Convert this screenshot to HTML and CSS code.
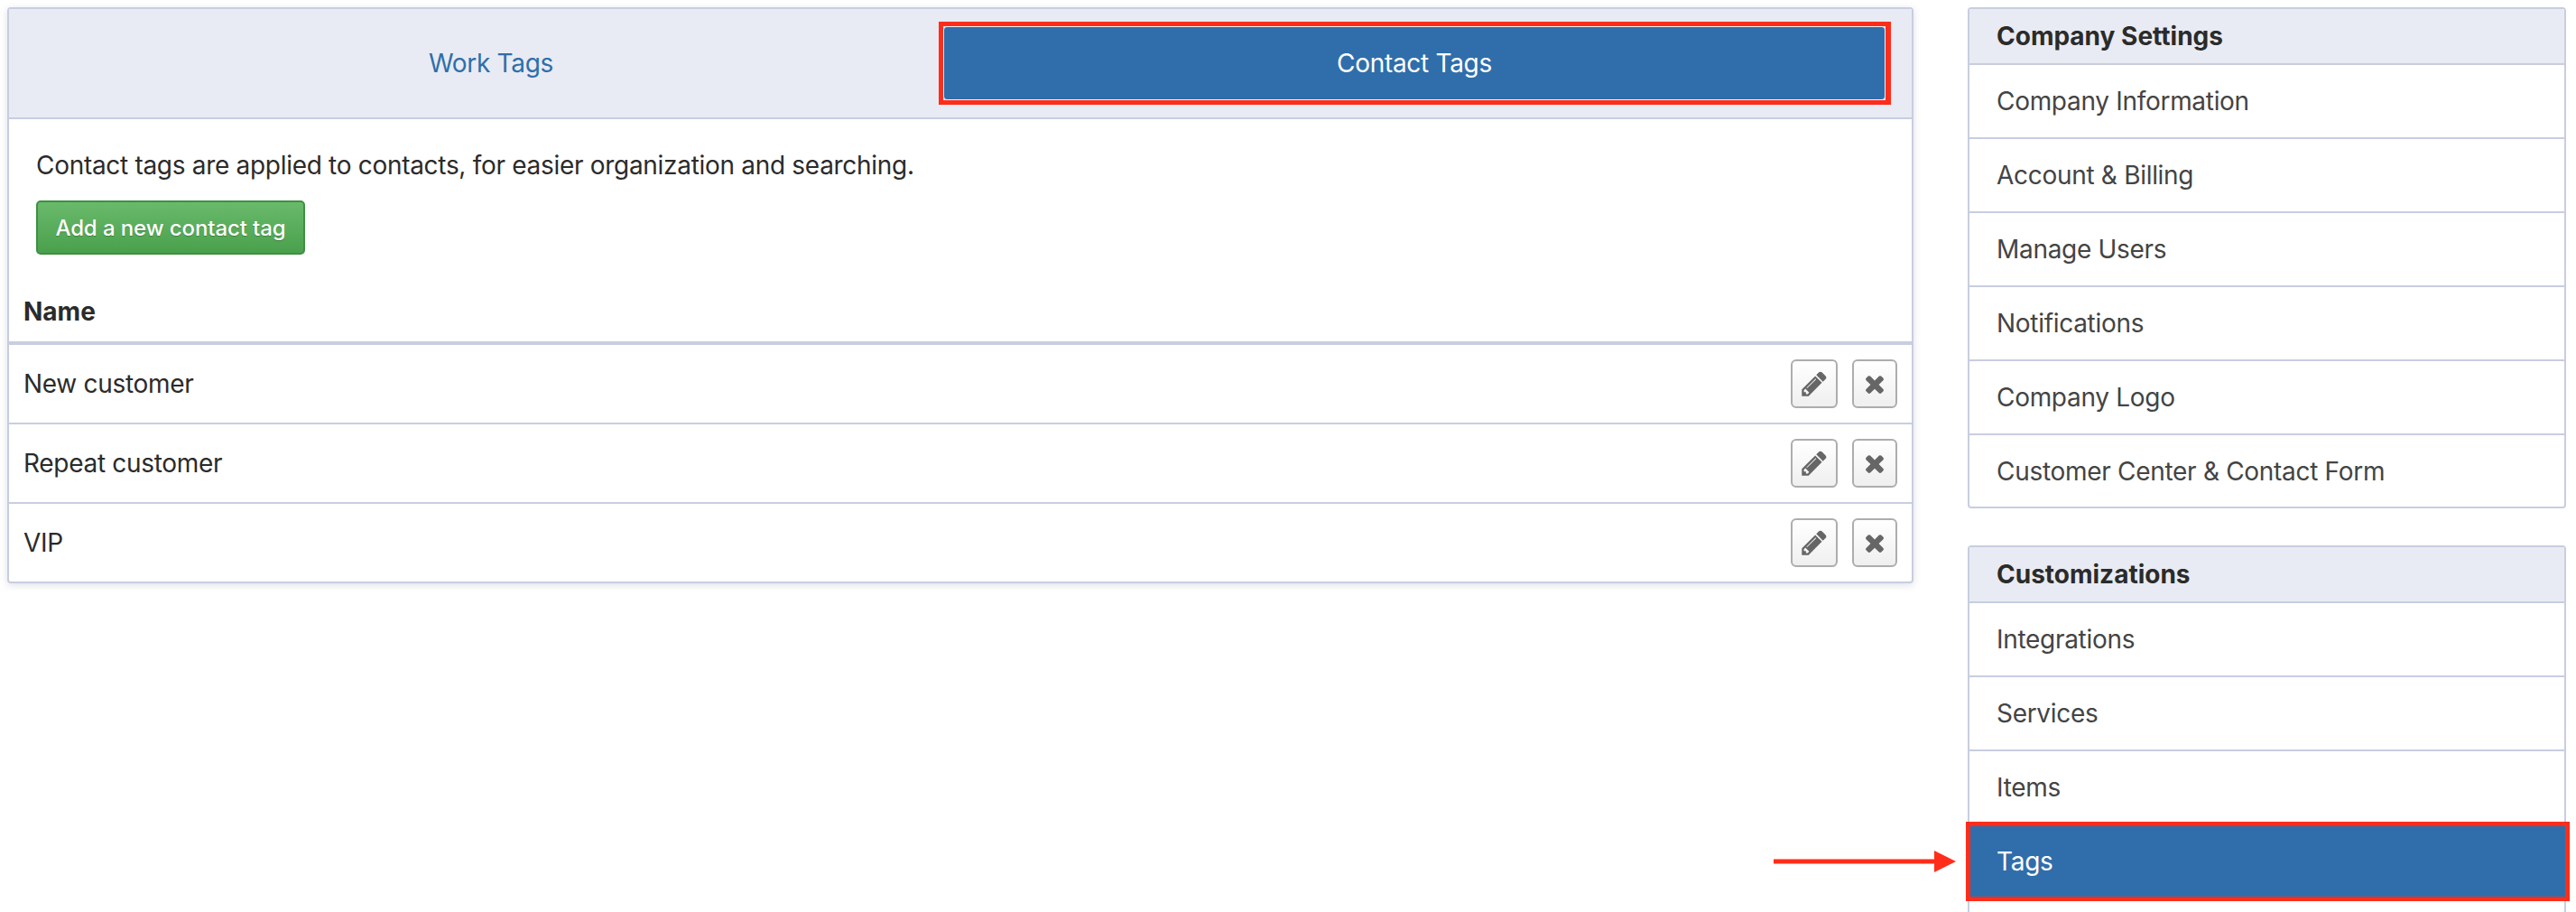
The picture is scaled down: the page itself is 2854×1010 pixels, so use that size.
FILE: index.html
```html
<!DOCTYPE html>
<html lang="en">
<head>
<meta charset="utf-8">
<title>Tags</title>
<link rel="stylesheet" href="styles.css">
</head>
<body>
<div class="page">
  <main class="panel main-panel">
    <div class="tabs">
      <a class="tab">Work Tags</a>
      <div class="tab-frame"><a class="tab tab-active">Contact Tags</a></div>
    </div>
    <div class="intro">
      <p class="intro-text">Contact tags are applied to contacts, for easier organization and searching.</p>
      <button class="btn-add">Add a new contact tag</button>
    </div>
    <div class="table-head">Name</div>
    <div class="tag-row">
      <span>New customer</span>
      <div class="actions">
        <button class="btn-icon btn-edit"><svg class="ico-edit" viewBox="0 0 1792 1792"><path d="M491 1536l91-91-235-235-91 91v107h128v128h107zm523-928q0-22-22-22-10 0-17 7l-542 542q-7 7-7 17 0 22 22 22 10 0 17-7l542-542q7-7 7-17zm-54-192l416 416-832 832h-416v-416zm683 96q0 53-37 90l-166 166-416-416 166-165q36-38 90-38 53 0 91 38l235 234q37 39 37 91z"/></svg></button>
        <button class="btn-icon btn-del"><svg class="ico-del" viewBox="0 0 1792 1792"><path d="M1490 1322q0 40-28 68l-136 136q-28 28-68 28t-68-28l-294-294-294 294q-28 28-68 28t-68-28l-136-136q-28-28-28-68t28-68l294-294-294-294q-28-28-28-68t28-68l136-136q28-28 68-28t68 28l294 294 294-294q28-28 68-28t68 28l136 136q28 28 28 68t-28 68l-294 294 294 294q28 28 28 68z"/></svg></button>
      </div>
    </div>
    <div class="tag-row">
      <span>Repeat customer</span>
      <div class="actions">
        <button class="btn-icon btn-edit"><svg class="ico-edit" viewBox="0 0 1792 1792"><path d="M491 1536l91-91-235-235-91 91v107h128v128h107zm523-928q0-22-22-22-10 0-17 7l-542 542q-7 7-7 17 0 22 22 22 10 0 17-7l542-542q7-7 7-17zm-54-192l416 416-832 832h-416v-416zm683 96q0 53-37 90l-166 166-416-416 166-165q36-38 90-38 53 0 91 38l235 234q37 39 37 91z"/></svg></button>
        <button class="btn-icon btn-del"><svg class="ico-del" viewBox="0 0 1792 1792"><path d="M1490 1322q0 40-28 68l-136 136q-28 28-68 28t-68-28l-294-294-294 294q-28 28-68 28t-68-28l-136-136q-28-28-28-68t28-68l294-294-294-294q-28-28-28-68t28-68l136-136q28-28 68-28t68 28l294 294 294-294q28-28 68-28t68 28l136 136q28 28 28 68t-28 68l-294 294 294 294q28 28 28 68z"/></svg></button>
      </div>
    </div>
    <div class="tag-row tag-row-last">
      <span>VIP</span>
      <div class="actions">
        <button class="btn-icon btn-edit"><svg class="ico-edit" viewBox="0 0 1792 1792"><path d="M491 1536l91-91-235-235-91 91v107h128v128h107zm523-928q0-22-22-22-10 0-17 7l-542 542q-7 7-7 17 0 22 22 22 10 0 17-7l542-542q7-7 7-17zm-54-192l416 416-832 832h-416v-416zm683 96q0 53-37 90l-166 166-416-416 166-165q36-38 90-38 53 0 91 38l235 234q37 39 37 91z"/></svg></button>
        <button class="btn-icon btn-del"><svg class="ico-del" viewBox="0 0 1792 1792"><path d="M1490 1322q0 40-28 68l-136 136q-28 28-68 28t-68-28l-294-294-294 294q-28 28-68 28t-68-28l-136-136q-28-28-28-68t28-68l294-294-294-294q-28-28-28-68t28-68l136-136q28-28 68-28t68 28l294 294 294-294q28-28 68-28t68 28l136 136q28 28 28 68t-28 68l-294 294 294 294q28 28 28 68z"/></svg></button>
      </div>
    </div>
  </main>
  <aside class="sidebar">
    <nav class="panel side-panel">
      <div class="side-head">Company Settings</div>
      <a class="side-item">Company Information</a>
      <a class="side-item">Account &amp; Billing</a>
      <a class="side-item">Manage Users</a>
      <a class="side-item">Notifications</a>
      <a class="side-item">Company Logo</a>
      <a class="side-item side-item-last">Customer Center &amp; Contact Form</a>
    </nav>
    <nav class="panel side-panel">
      <div class="side-head">Customizations</div>
      <a class="side-item">Integrations</a>
      <a class="side-item">Services</a>
      <a class="side-item">Items</a>
      <a class="side-item side-item-active">Tags
        <svg class="arrow" viewBox="0 0 202 24"><path d="M0 9.5h178V0l24 12-24 12V14.500H0z"/></svg>
      </a>
      <a class="side-item"></a>
    </nav>
  </aside>
</div>
</body>
</html>
```
FILE: styles.css
```css
* { box-sizing: border-box; }
html, body { margin: 0; height: 100%; overflow: hidden; background: #fff; }
body { font-family: Inter, "Liberation Sans", sans-serif; font-size: 28px; letter-spacing: -0.3px; color: #2b2b2b; }
.page { display: flex; align-items: flex-start; gap: 60px; padding: 8px 11px 0 8px; height: 100%; overflow: hidden; }
.panel { background: #fff; border: 2px solid #c8cee0; border-radius: 4px; }
.main-panel { flex: 0 0 2112px; box-shadow: 0 2px 8px rgba(70, 80, 120, .18); }
.tabs { display: grid; grid-template-columns: 1fr 1055px; height: 122px; padding: 14px 23px 14px 38px; background: #e8ebf3; border-bottom: 2px solid #c8cee0; }
.tab { display: flex; align-items: center; justify-content: center; color: #2f6eaa; }
.tab-frame { display: flex; border: 5px solid #ff2d1a; border-right-width: 6px; }
.tab-active { flex: 1; background: #2f6eaa; color: #fff; border: 1px solid #f2f4f8; border-radius: 4px; }
.intro { height: 196px; padding: 32px 30px 0; }
.intro-text { margin: 0; line-height: 38px; }
.btn-add { display: block; width: 298px; height: 60px; margin-top: 20px; padding: 0; font: 500 24px Inter, "Liberation Sans", sans-serif; letter-spacing: -0.1px; color: #fff; text-shadow: 0 1px 1px rgba(0, 0, 0, .25); background: linear-gradient(#69ba6b, #4aa04c); border: 2px solid #3f8f42; border-radius: 5px; }
.table-head { display: flex; align-items: center; height: 54px; padding: 0 16px 16px; font-weight: 700; letter-spacing: 0; border-bottom: 4px solid #c8cee0; }
.tag-row { display: flex; align-items: center; justify-content: space-between; height: 88px; padding: 0 16px; border-bottom: 2px solid #c8cee0; }
.tag-row-last { height: 86px; border-bottom: 0; }
.actions { display: flex; gap: 16px; }
.btn-icon { display: flex; align-items: center; justify-content: center; height: 54px; padding: 0; background: linear-gradient(#fff, #efefef); border: 2px solid #adadad; border-radius: 6px; }
.btn-edit { width: 52px; }
.btn-del { width: 50px; }
.btn-icon svg { display: block; fill: #666; }
.ico-edit { width: 32px; height: 32px; }
.ico-del { width: 30px; height: 30px; }
.sidebar { flex: 0 0 663px; display: flex; flex-direction: column; gap: 41px; }
.side-head { display: flex; align-items: center; height: 62px; padding: 0 30px; font-weight: 700; letter-spacing: 0; background: #e8ebf3; border-bottom: 2px solid #c8cee0; }
.side-item { display: flex; align-items: center; height: 82px; padding: 0 30px; color: #444; border-bottom: 2px solid #c8cee0; }
.side-item-last { height: 79px; border-bottom: 0; }
.side-item-active { position: relative; height: 80px; margin-right: -2px; padding-left: 29px; color: #fff; background: #2f6eaa; background-clip: padding-box; border: 1px solid transparent; outline: 5px solid #ff2d1a; outline-offset: -1px; }
.arrow { position: absolute; left: -218px; top: 27px; width: 202px; height: 24px; fill: #ff2d1a; }
```
